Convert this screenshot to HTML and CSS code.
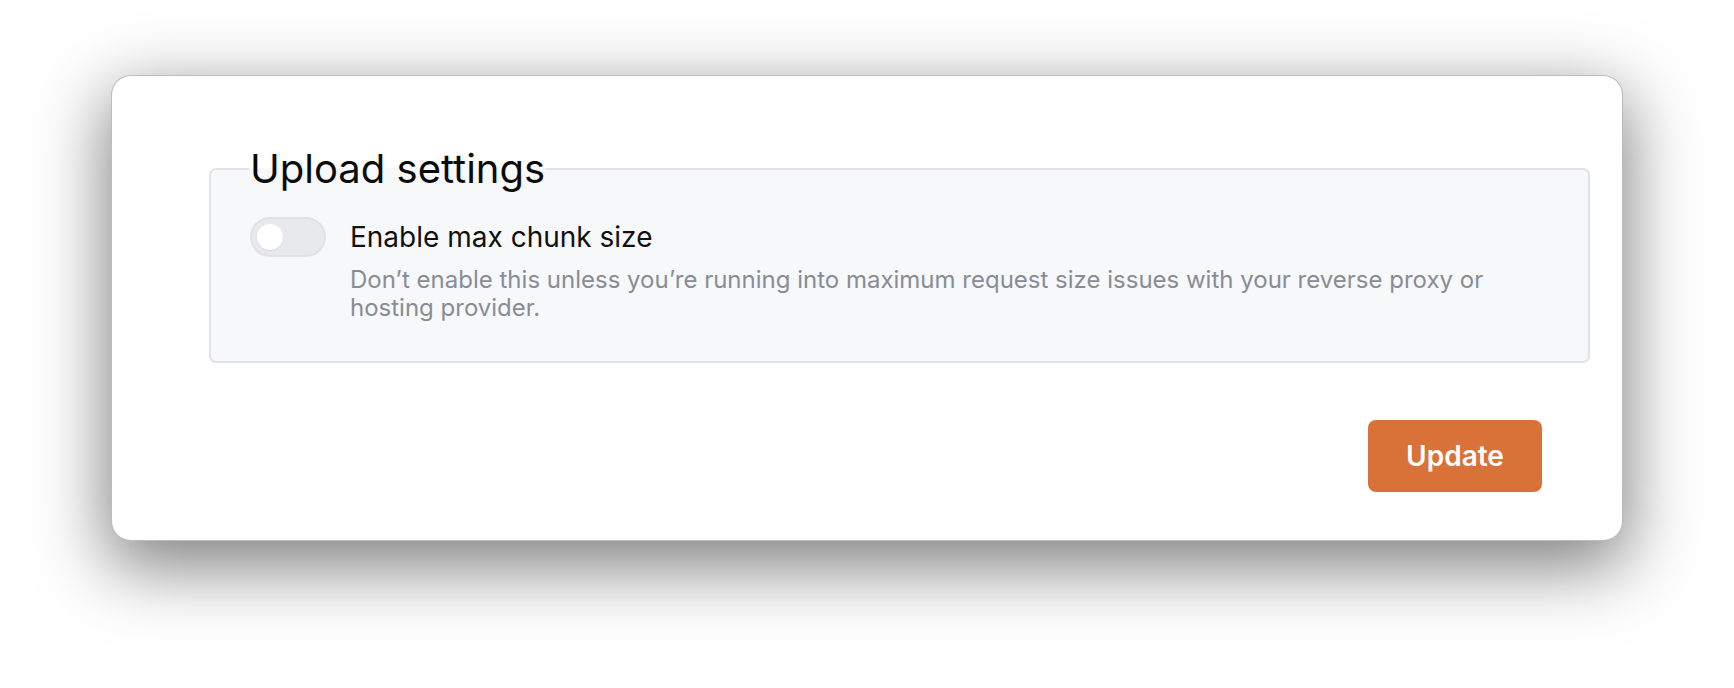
FILE: index.html
```html
<!DOCTYPE html>
<html lang="en">
<head>
<meta charset="utf-8">
<title>Upload settings</title>
<link rel="stylesheet" href="styles.css">
</head>
<body>
<div class="stage">
  <form class="card">
    <fieldset class="group">
      <legend class="group-title">Upload settings</legend>
      <div class="setting">
        <button type="button" class="toggle" role="switch" aria-checked="false"><span class="knob"></span></button>
        <div class="setting-text">
          <div class="setting-label">Enable max chunk size</div>
          <p class="setting-help">Don’t enable this unless you’re running into maximum request size issues with your reverse proxy or hosting provider.</p>
        </div>
      </div>
    </fieldset>
    <div class="actions">
      <button type="submit" class="btn-primary">Update</button>
    </div>
  </form>
</div>
</body>
</html>
```
FILE: styles.css
```css
* { box-sizing: border-box; }
html, body { margin: 0; padding: 0; background: #ffffff; }
body {
  font-family: "Inter", "Liberation Sans", sans-serif;
  color: #111111;
  width: 1734px;
  height: 688px;
  overflow: hidden;
}
.stage {
  padding: 75px 0 0 111px;
}
.card {
  width: 1512px;
  background: #ffffff;
  border: 1px solid rgba(0, 0, 0, 0.26);
  border-radius: 20px;
  box-shadow: 0 22px 70px 4px rgba(0, 0, 0, 0.5);
  padding: 68px 32px 48px 97px;
  display: flex;
  flex-direction: column;
}
.group {
  margin: 0;
  border: 2px solid #e1e3e7;
  border-radius: 7px;
  background: #f7f8fa;
  padding: 23.5px 39px 39px 39px;
  min-width: 0;
}
.group-title {
  font-size: 40px;
  font-weight: 400;
  line-height: normal;
  color: #0b0b0b;
  padding: 0 1px;
  margin-left: -1px;
}
.setting {
  display: flex;
  align-items: flex-start;
  gap: 24px;
}
.toggle {
  flex: none;
  width: 76px;
  height: 40px;
  border: 2px solid #dfe1e5;
  border-radius: 20px;
  background: #e8e9ed;
  padding: 0 0 0 5px;
  display: flex;
  align-items: center;
  cursor: pointer;
}
.knob {
  width: 26px;
  height: 26px;
  border-radius: 50%;
  background: #ffffff;
  box-shadow: 0 1px 2px rgba(0, 0, 0, 0.08);
}
.setting-text {
  flex: 1;
  min-width: 0;
}
.setting-label {
  font-size: 28px;
  line-height: 40px;
  color: #111111;
}
.setting-help {
  margin: 9px 0 0 0;
  font-size: 24px;
  line-height: 28.4px;
  color: #878d96;
}
.actions {
  display: flex;
  justify-content: flex-end;
  margin-top: 57px;
  padding-right: 48px;
}
.btn-primary {
  font-family: "Inter", "Liberation Sans", sans-serif;
  font-size: 28px;
  font-weight: 600;
  line-height: 34px;
  color: #ffffff;
  background: #d97238;
  border: none;
  border-radius: 8px;
  padding: 19px 38px;
  width: 174px;
  cursor: pointer;
}
```
